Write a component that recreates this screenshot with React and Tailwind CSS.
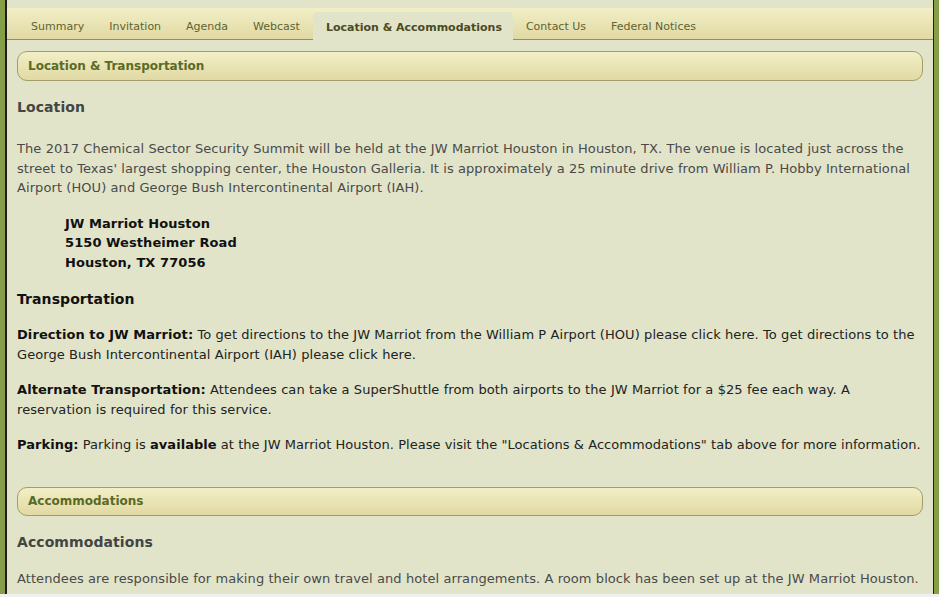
export default function App() {
  const tabs = [
    "Summary",
    "Invitation",
    "Agenda",
    "Webcast",
    "Location & Accommodations",
    "Contact Us",
    "Federal Notices",
  ];
  const active = "Location & Accommodations";

  return (
    <div
      className="w-[939px] h-[597px] bg-[#f0f0f0] overflow-hidden"
      style={{ fontFamily: '"DejaVu Sans", Verdana, sans-serif' }}
    >
      <div className="flex h-[594px] overflow-hidden">
        {/* left frame */}
        <div className="w-[5px] bg-[#879e48]"></div>
        <div className="w-[2px] bg-[#1e1e1a]"></div>

        <div className="flex-1 bg-[#e1e4c9] pt-[8px]">
          {/* tabs */}
          <div className="h-[32px] flex items-end gap-[1px] pl-[12px] bg-gradient-to-b from-[#f2efc6] to-[#e1d9a4] border-b border-[#8e8b78]">
            {tabs.map((t) =>
              t === active ? (
                <div
                  key={t}
                  className="h-[28px] -mb-px flex items-center pt-[4px] pl-[13px] pr-[11px] rounded-t-[4px] bg-[#e1e4c9] text-[11px] font-bold text-[#4b4a22]"
                >
                  {t}
                </div>
              ) : (
                <div
                  key={t}
                  className="h-[27px] flex items-center pt-[4px] px-[12px] text-[11px] text-[#5d6330]"
                >
                  {t}
                </div>
              )
            )}
          </div>

          {/* content */}
          <div className="px-[10px] text-[13px] tracking-[0.08px] text-[#4a4a4a]">
            <SectionBar title="Location & Transportation" className="h-[30px] mt-[11px]" />

            <h2 className="mt-[16px] text-[14px] leading-[20px] font-bold text-[#444444]">
              Location
            </h2>
            <p className="mt-[22px] leading-[19.5px]">
              The 2017 Chemical Sector Security Summit will be held at the JW
              Marriot Houston in Houston, TX. The venue is located just across
              the street to Texas' largest shopping center, the Houston
              Galleria. It is approximately a 25 minute drive from William P.
              Hobby International Airport (HOU) and George Bush
              Intercontinental Airport (IAH).
            </p>
            <div className="mt-[16px] ml-[48px] leading-[19.5px] font-bold text-[#111111]">
              <div>JW Marriot Houston</div>
              <div>5150 Westheimer Road</div>
              <div>Houston, TX 77056</div>
            </div>

            <h2 className="mt-[17px] text-[14px] leading-[20px] font-bold text-[#111111]">
              Transportation
            </h2>
            <p className="mt-[16px] leading-[19.5px] text-[#222222]">
              <b className="text-[#111111]">Direction to JW Marriot:</b> To get
              directions to the JW Marriot from the William P Airport (HOU)
              please click here. To get directions to the George Bush
              Intercontinental Airport (IAH) please click here.
            </p>
            <p className="mt-[16px] leading-[19.5px] text-[#222222]">
              <b className="text-[#111111]">Alternate Transportation:</b>{" "}
              Attendees can take a SuperShuttle from both airports to the JW
              Marriot for a $25 fee each way. A reservation is required for
              this service.
            </p>
            <p className="mt-[16px] leading-[19.5px] whitespace-nowrap tracking-[0.04px] text-[#222222]">
              <b className="text-[#111111]">Parking:</b> Parking is{" "}
              <b className="text-[#111111]">available</b> at the JW Marriot
              Houston. Please visit the "Locations &amp; Accommodations" tab
              above for more information.
            </p>

            <SectionBar title="Accommodations" className="h-[29px] mt-[32px]" />

            <h2 className="mt-[16px] text-[14px] leading-[20px] font-bold text-[#444444]">
              Accommodations
            </h2>
            <p className="mt-[17px] leading-[19.5px]">
              Attendees are responsible for making their own travel and hotel
              arrangements. A room block has been set up at the JW Marriot
              Houston.
            </p>
          </div>
        </div>

        {/* right frame */}
        <div className="w-[1px] bg-[#1e1e1a]"></div>
        <div className="w-[5px] bg-[#879e48]"></div>
      </div>
    </div>
  );
}

function SectionBar({ title, className }) {
  return (
    <div
      className={
        "flex items-center pl-[10px] rounded-[10px] border border-[#a39d6c] bg-gradient-to-b from-[#f2efc6] to-[#e1d9a4] text-[12px] tracking-normal font-bold text-[#5a6a27] " +
        className
      }
    >
      {title}
    </div>
  );
}
